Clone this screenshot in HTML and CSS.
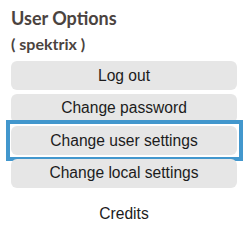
FILE: index.html
```html
<!DOCTYPE html>
<html lang="en">
<head>
  <meta charset="UTF-8">
  <title>User Options</title>
  <link rel="stylesheet" href="styles.css">
</head>
<body>
  <!-- User options panel -->
  <div class="panel">
    <h2 class="title">User Options</h2>
    <p class="user">( spektrix )</p>
    <div class="options">
      <button type="button" class="btn">Log out</button>
      <button type="button" class="btn">Change password</button>
      <button type="button" class="btn focused">Change user settings</button>
      <button type="button" class="btn">Change local settings</button>
    </div>
    <p class="credits">Credits</p>
  </div>
</body>
</html>
```

FILE: styles.css
```css
/* Global styling */
body { margin: 0; background: #fff; font-family: "Liberation Sans", Arial, sans-serif; }
.panel { padding: 7px 9px 0 11px; }

/* Heading */
.title { margin: 0; font-family: Lato, sans-serif; font-weight: bold; font-size: 18px; line-height: 22px; color: #4b4340; }
.user { margin: 5px 0 0; font-family: Lato, sans-serif; font-weight: bold; font-size: 16px; line-height: 20px; color: #4b4340; }

/* Option buttons */
.options { display: flex; flex-direction: column; gap: 3.5px; margin-top: 7px; }
.btn { position: relative; height: 29px; padding: 0; border: none; border-radius: 6px; background: #e6e6e6; color: #1c1c1c; font-family: "Liberation Sans", Arial, sans-serif; font-size: 15.6px; cursor: pointer; }
.btn.focused::after { content: ""; position: absolute; top: -6px; bottom: -6px; left: -5px; right: -6px; border: 4px solid #4297cd; }

.credits { margin: 16.5px 0 0; text-align: center; font-size: 15.6px; line-height: 20px; color: #1c1c1c; }
```
